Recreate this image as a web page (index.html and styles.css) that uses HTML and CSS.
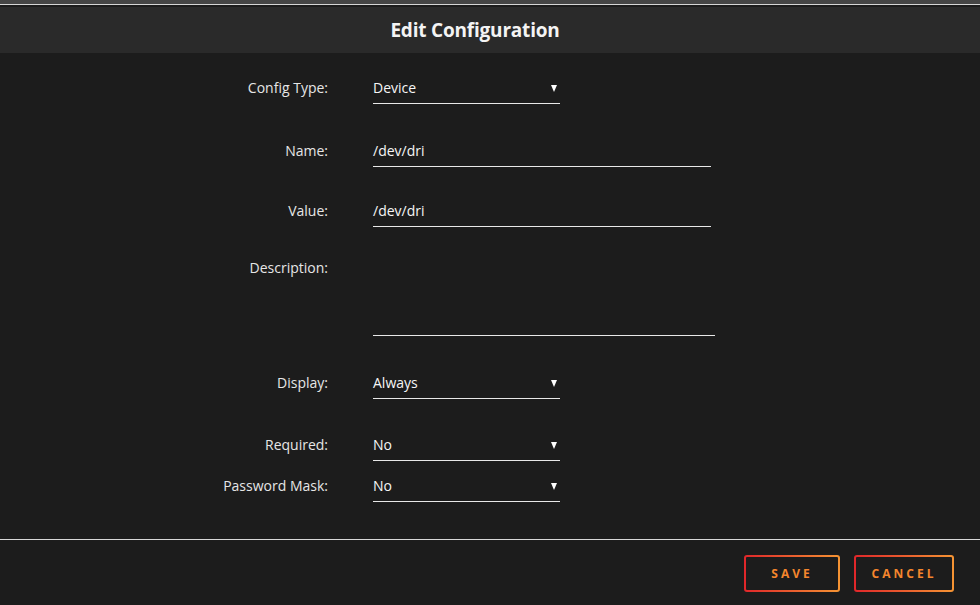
FILE: index.html
```html
<!DOCTYPE html>
<html lang="en">
<head>
    <meta charset="UTF-8">
    <title>Edit Configuration</title>
    <link rel="stylesheet" href="styles.css">
</head>
<body>
    <div class="topbar"></div>
    <div class="modal">
        <div class="modal-header">Edit Configuration</div>

        <div class="modal-body">
            <div class="row r-type">
                <label>Config Type:</label>
                <div class="field select short">Device<span class="arrow"></span></div>
            </div>
            <div class="row r-name">
                <label>Name:</label>
                <div class="field">/dev/dri</div>
            </div>
            <div class="row r-value">
                <label>Value:</label>
                <div class="field">/dev/dri</div>
            </div>
            <div class="row r-desc">
                <label>Description:</label>
                <div class="field area"></div>
            </div>
            <div class="row r-display">
                <label>Display:</label>
                <div class="field select short">Always<span class="arrow"></span></div>
            </div>
            <div class="row r-req">
                <label>Required:</label>
                <div class="field select short">No<span class="arrow"></span></div>
            </div>
            <div class="row r-mask">
                <label>Password Mask:</label>
                <div class="field select short">No<span class="arrow"></span></div>
            </div>
        </div>

        <div class="modal-footer">
            <button class="btn btn-save">SAVE</button>
            <button class="btn btn-cancel">CANCEL</button>
        </div>
    </div>
</body>
</html>
```

FILE: styles.css
```css
body {
    margin: 0;
    background: #1c1c1c;
    font-family: "Open Sans", Arial, sans-serif;
    color: #f2f2f2;
    height: 605px;
    overflow: hidden;
}
.topbar {
    height: 4px;
    background: #454545;
    border-bottom: 1px solid #d6d6d6;
    margin-bottom: 2px;
}
.modal-header {
    height: 46px;
    line-height: 46px;
    background: #2a2a2a;
    text-align: center;
    padding-right: 30px;
    font-size: 19px;
    font-weight: bold;
    color: #f4f4f4;
    letter-spacing: -0.2px;
}
.modal-body {
    padding: 21px 0 37px 0;
    border-bottom: 1px solid #d8d8d8;
}
.row {
    display: grid;
    grid-template-columns: 328px 342px;
    column-gap: 45px;
    align-items: start;
}
.row label {
    text-align: right;
    font-size: 14px;
    line-height: 27px;
    color: #e6e6e6;
}
.field {
    box-sizing: border-box;
    height: 30px;
    line-height: 28px;
    font-size: 14px;
    color: #f6f6f6;
    border-bottom: 1px solid #e8e8e8;
    width: 338px;
    position: relative;
}
.field.short { width: 187px; }
.field.area { width: 342px; height: 82px; }
.arrow {
    position: absolute;
    right: 3px;
    top: 11px;
    width: 0;
    height: 0;
    border-left: 3px solid transparent;
    border-right: 3px solid transparent;
    border-top: 7px solid #ffffff;
}
.r-name { margin-top: 33px; }
.r-value { margin-top: 30px; }
.r-desc { margin-top: 27px; }
.r-display { margin-top: 33px; }
.r-req { margin-top: 32px; }
.r-mask { margin-top: 11px; }

.modal-footer {
    display: flex;
    justify-content: flex-end;
    gap: 14px;
    padding: 15px 26px 0 0;
}
.btn {
    height: 37px;
    border: 2px solid transparent;
    border-radius: 3px;
    background: linear-gradient(#1c1c1c, #1c1c1c) padding-box,
                linear-gradient(to right, #e0262a, #f59433) border-box;
    color: #f5862d;
    font-family: "Open Sans", Arial, sans-serif;
    font-size: 12px;
    font-weight: bold;
    letter-spacing: 3px;
    cursor: pointer;
}
.btn-save { width: 96px; }
.btn-cancel { width: 100px; }
```
